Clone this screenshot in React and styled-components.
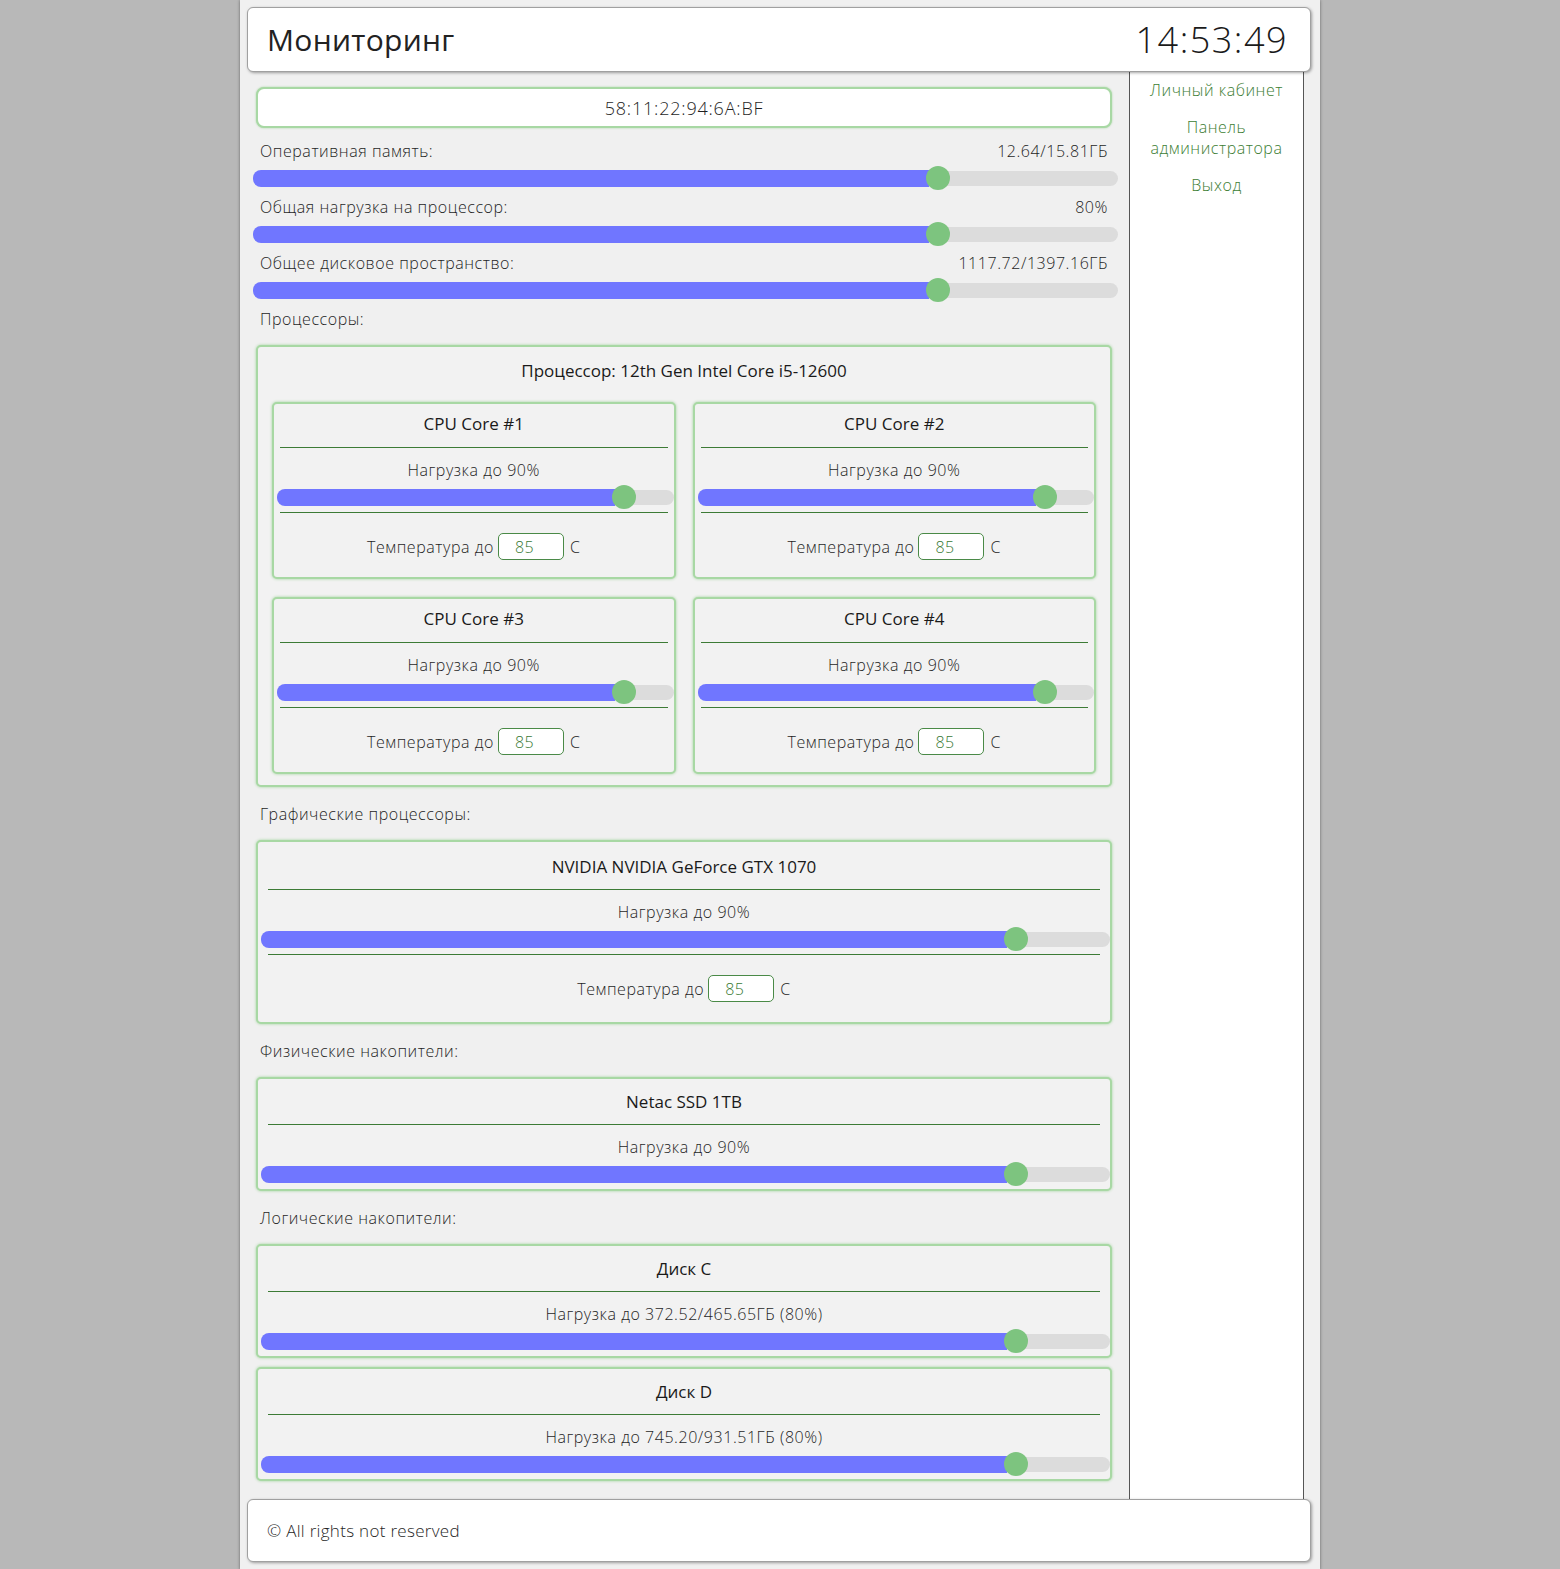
import React from "react";
import styled, { createGlobalStyle } from "styled-components";

const GlobalStyle = createGlobalStyle`
  html, body {
    margin: 0;
    padding: 0;
    background: #b8b8b8;
    font-family: "Open Sans", "Noto Sans", sans-serif;
    color: #222;
  }
`;

const summary = [
  { label: "Оперативная память:", value: "12.64/15.81ГБ", p: 0.8 },
  { label: "Общая нагрузка на процессор:", value: "80%", p: 0.8 },
  { label: "Общее дисковое пространство:", value: "1117.72/1397.16ГБ", p: 0.8 },
];

const cores = [1, 2, 3, 4];

const logical = [
  { name: "Диск C", load: "372.52/465.65ГБ (80%)" },
  { name: "Диск D", load: "745.20/931.51ГБ (80%)" },
];

const Slider = ({ p, inset }) => {
  const left = `calc(${p} * (100% - 24px))`;
  return (
    <SliderWrap $inset={inset}>
      <Track>
        <Fill style={{ width: `calc(${p} * (100% - 24px) + 3px)` }} />
        <Thumb style={{ left }} />
      </Track>
    </SliderWrap>
  );
};

const TempRow = () => (
  <Temp>
    Температура до
    <TempInput defaultValue="85" />
    C
  </Temp>
);

const App = () => {
  return (
    <>
      <GlobalStyle />
      <Page>
        <Header>
          <Title>Мониторинг</Title>
          <Clock>14:53:49</Clock>
        </Header>
        <Body>
          <Main>
            <MacBox>58:11:22:94:6A:BF</MacBox>
            {summary.map((s) => (
              <div key={s.label}>
                <LabelRow>
                  <span>{s.label}</span>
                  <span>{s.value}</span>
                </LabelRow>
                <Slider p={s.p} />
              </div>
            ))}

            <SectionLabel $first>Процессоры:</SectionLabel>
            <GroupBox>
              <GroupTitle>Процессор: 12th Gen Intel Core i5-12600</GroupTitle>
              <CoreGrid>
                {cores.map((n) => (
                  <DeviceCard key={n} $core>
                    <DeviceTitle $core>CPU Core #{n}</DeviceTitle>
                    <Rule $core />
                    <LoadLabel>Нагрузка до 90%</LoadLabel>
                    <Slider p={0.9} inset />
                    <Rule $core />
                    <TempRow />
                  </DeviceCard>
                ))}
              </CoreGrid>
            </GroupBox>

            <SectionLabel>Графические процессоры:</SectionLabel>
            <DeviceCard>
              <DeviceTitle>NVIDIA NVIDIA GeForce GTX 1070</DeviceTitle>
              <Rule />
              <LoadLabel>Нагрузка до 90%</LoadLabel>
              <Slider p={0.9} inset />
              <Rule />
              <TempRow />
            </DeviceCard>

            <SectionLabel>Физические накопители:</SectionLabel>
            <DeviceCard $flat>
              <DeviceTitle>Netac SSD 1TB</DeviceTitle>
              <Rule />
              <LoadLabel>Нагрузка до 90%</LoadLabel>
              <Slider p={0.9} inset />
            </DeviceCard>

            <SectionLabel>Логические накопители:</SectionLabel>
            <DiskList>
              {logical.map((d) => (
                <DeviceCard key={d.name} $flat>
                  <DeviceTitle>{d.name}</DeviceTitle>
                  <Rule />
                  <LoadLabel>Нагрузка до {d.load}</LoadLabel>
                  <Slider p={0.9} inset />
                </DeviceCard>
              ))}
            </DiskList>
          </Main>
          <Sidebar>
            <NavLink href="#">Личный кабинет</NavLink>
            <NavLink href="#">
              Панель
              <br />
              администратора
            </NavLink>
            <NavLink href="#">Выход</NavLink>
          </Sidebar>
        </Body>
        <Footer>© All rights not reserved</Footer>
      </Page>
    </>
  );
};

export default App;

const Page = styled.div`
  width: 1080px;
  margin: 0 auto;
  box-sizing: border-box;
  padding: 7px 9px 8px 7px;
  background: #f0f0f0;
  box-shadow: 0 0 3px rgba(0, 0, 0, 0.45);
  min-height: 100vh;
  display: flex;
  flex-direction: column;
`;

const Header = styled.header`
  height: 65px;
  box-sizing: border-box;
  display: flex;
  align-items: center;
  justify-content: space-between;
  padding: 0 22px 0 19px;
  background: #fff;
  border-radius: 6px;
  border: 1px solid #a0a0a0;
  box-shadow: 1px 1px 3px rgba(0, 0, 0, 0.35);
  position: relative;
  z-index: 1;
`;

const Title = styled.h1`
  margin: 0;
  font-size: 30px;
  font-weight: 400;
  color: #222;
  letter-spacing: 0.3px;
`;

const Clock = styled.div`
  font-size: 36px;
  font-weight: 300;
  color: #1a1a1a;
  letter-spacing: 1.5px;
`;

const Body = styled.div`
  display: flex;
  margin-right: 7px;
  flex: 1;
`;

const Main = styled.main`
  flex: 1;
  padding: 15px 11px 18px 6px;
`;

const MacBox = styled.div`
  margin: 0 6px 11px 3px;
  height: 41px;
  box-sizing: border-box;
  display: flex;
  align-items: center;
  justify-content: center;
  background: #fff;
  border: 2px solid #a8d8a4;
  border-radius: 8px;
  box-shadow: 0 0 2px #9fd39b;
  font-size: 18px;
  font-weight: 300;
  letter-spacing: 0.8px;
  color: #1f1f1f;
`;

const LabelRow = styled.div`
  display: flex;
  justify-content: space-between;
  padding: 0 10px 0 7px;
  height: 24px;
  line-height: 24px;
  font-size: 16px;
  font-weight: 300;
  letter-spacing: 0.55px;
  color: #1f1f1f;
`;

const SliderWrap = styled.div`
  height: 30px;
  display: flex;
  align-items: center;
  margin: ${(p) => (p.$inset ? "0 0 0 3px" : "0 0 2px 0")};
`;

const Track = styled.div`
  position: relative;
  flex: 1;
  height: 15px;
  border-radius: 8px;
  background: #dcdcdc;
  display: flex;
  align-items: center;
`;

const Fill = styled.div`
  height: 17px;
  border-radius: 8px 0 0 8px;
  background: #7076ff;
`;

const Thumb = styled.div`
  position: absolute;
  top: 50%;
  width: 24px;
  height: 24px;
  margin-top: -12px;
  border-radius: 50%;
  background: #7dc47f;
`;

const SectionLabel = styled.div`
  margin: ${(p) => (p.$first ? "0" : "15px")} 0 14px;
  padding-left: 7px;
  height: 24px;
  line-height: 24px;
  font-size: 16px;
  font-weight: 300;
  letter-spacing: 0.55px;
  color: #1f1f1f;
`;

const GroupBox = styled.section`
  margin: 0 6px 0 3px;
  padding: 11px 14px 11px;
  border: 2px solid #a8d8a4;
  border-radius: 5px;
  box-shadow: 0 0 3px #9fd39b;
  background: #f2f2f2;
`;

const GroupTitle = styled.div`
  text-align: center;
  height: 26px;
  line-height: 26px;
  font-size: 17px;
  color: #1a1a1a;
  margin-bottom: 18px;
`;

const CoreGrid = styled.div`
  display: grid;
  grid-template-columns: 1fr 1fr;
  column-gap: 17px;
  row-gap: 18px;
`;

const DeviceCard = styled.div`
  margin: ${(p) => (p.$core ? "0" : "0 6px 0 3px")};
  padding: ${(p) => (p.$core ? "7px 0 17px 0" : p.$flat ? "10px 0 0 0" : "12px 0 20px 0")};
  border: 2px solid #a8d8a4;
  border-radius: 5px;
  box-shadow: 0 0 3px #9fd39b;
  background: #f2f2f2;
  display: flex;
  flex-direction: column;
`;

const DeviceTitle = styled.div`
  text-align: center;
  height: 26px;
  line-height: 26px;
  font-size: 17px;
  color: #1a1a1a;
  margin-bottom: ${(p) => (p.$core ? "10px" : "9px")};
`;

const Rule = styled.hr`
  margin: 0 ${(p) => (p.$core ? "6px" : "10px")};
  border: none;
  border-top: 1px solid #3d7b36;
  height: 0;
`;

const LoadLabel = styled.div`
  margin-top: 10px;
  text-align: center;
  height: 24px;
  line-height: 24px;
  font-size: 16px;
  font-weight: 300;
  letter-spacing: 0.55px;
  color: #1f1f1f;
`;

const Temp = styled.div`
  margin-top: 20px;
  display: flex;
  align-items: center;
  justify-content: center;
  gap: 4px;
  font-size: 16px;
  font-weight: 300;
  letter-spacing: 0.55px;
  color: #1f1f1f;
`;

const TempInput = styled.input`
  width: 66px;
  height: 27px;
  box-sizing: border-box;
  margin-right: 2px;
  padding: 0 0 0 16px;
  border: 1px solid #4a8a47;
  border-radius: 5px;
  background: #fff;
  color: #3a7a35;
  font-family: inherit;
  font-size: 16px;
  font-weight: 300;
  letter-spacing: 0.55px;
  outline: none;
`;

const DiskList = styled.div`
  display: flex;
  flex-direction: column;
  gap: 9px;
`;

const Sidebar = styled.nav`
  width: 175px;
  box-sizing: border-box;
  background: #fff;
  border-left: 1px solid #555;
  border-right: 1px solid #555;
  padding-top: 8px;
  display: flex;
  flex-direction: column;
  align-items: center;
  gap: 16px;
`;

const NavLink = styled.a`
  text-align: center;
  font-size: 16px;
  font-weight: 300;
  letter-spacing: 0.55px;
  line-height: 21px;
  color: #3c7d33;
  text-decoration: none;
`;

const Footer = styled.footer`
  height: 63px;
  box-sizing: border-box;
  display: flex;
  align-items: center;
  padding-left: 19px;
  background: #fff;
  border-radius: 6px;
  border: 1px solid #a0a0a0;
  box-shadow: 1px 1px 3px rgba(0, 0, 0, 0.35);
  font-size: 17px;
  font-weight: 300;
  letter-spacing: 0.3px;
  color: #1f1f1f;
  position: relative;
  z-index: 1;
`;
